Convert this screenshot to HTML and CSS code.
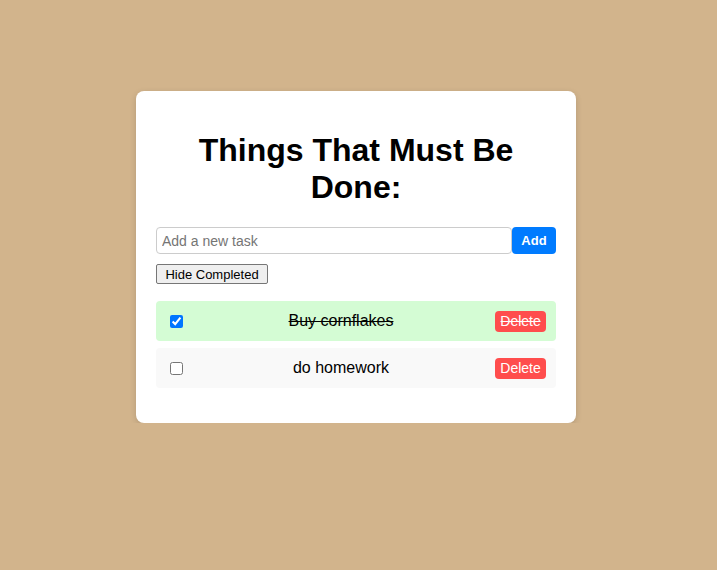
FILE: index.html
```html
<!DOCTYPE html>
<html>
<head>
<meta charset="utf-8">
<link rel="stylesheet" href="styles.css">
</head>
<body>
<div class="card">
  <h1 class="title">Things That Must Be Done:</h1>
  <div class="add-row">
    <input class="task-input" type="text" placeholder="Add a new task">
    <button class="add-btn">Add</button>
  </div>
  <button class="hide-btn">Hide Completed</button>
  <ul class="list">
    <li class="item completed">
      <input type="checkbox" class="check" checked>
      <span class="label">Buy cornflakes</span>
      <button class="del-btn">Delete</button>
    </li>
    <li class="item">
      <input type="checkbox" class="check">
      <span class="label">do homework</span>
      <button class="del-btn">Delete</button>
    </li>
  </ul>
</div>
</body>
</html>
```

FILE: styles.css
```css
html, body {
  margin: 0;
  padding: 0;
}
body {
  background: #d2b48c;
  font-family: "Liberation Sans", Arial, sans-serif;
  display: flex;
  justify-content: center;
  padding: 91px 5px 0 0;
}
.card {
  width: 400px;
  background: #fff;
  border-radius: 8px;
  padding: 20px 20px 35px;
  box-shadow: 0 2px 6px rgba(0,0,0,0.15);
}
.title {
  font-size: 32px;
  font-weight: bold;
  text-align: center;
  margin: 21px 0 21px;
  line-height: 37px;
}
.add-row {
  display: flex;
}
.task-input {
  flex: 1;
  height: 27px;
  box-sizing: border-box;
  border: 1px solid #ccc;
  border-radius: 4px;
  padding: 4px 5px;
  font-family: "Liberation Sans", Arial, sans-serif;
  font-size: 14px;
  margin: 0;
  outline: none;
}
.task-input::placeholder {
  color: #757575;
}
.add-btn {
  width: 44px;
  height: 27px;
  border: none;
  border-radius: 4px;
  background: #007bff;
  color: #fff;
  font-family: "Liberation Sans", Arial, sans-serif;
  font-size: 13px;
  font-weight: bold;
  margin: 0;
  padding: 0;
}
.hide-btn {
  display: block;
  margin-top: 10px;
  height: 20px;
  width: 112px;
  padding: 0;
  font-family: "Liberation Sans", Arial, sans-serif;
  font-size: 13px;
  background: #efefef;
  border: 1px solid #767676;
  border-radius: 2px;
  color: #000;
}
.list {
  list-style: none;
  margin: 17px 0 0;
  padding: 0;
  display: flex;
  flex-direction: column;
  gap: 7px;
}
.item {
  display: flex;
  align-items: center;
  height: 40px;
  box-sizing: border-box;
  padding: 0 10px;
  background: #f9f9f9;
  border-radius: 4px;
  font-size: 16px;
}
.item.completed {
  background: #d4fcd4;
  text-decoration: line-through;
}
.check {
  width: 13px;
  height: 13px;
  margin: 0 0 0 4px;
}
.label {
  flex: 1;
  text-align: center;
  padding-left: 4px;
}
.del-btn {
  background: #ff4d4d;
  color: #fff;
  border: none;
  border-radius: 4px;
  height: 21px;
  width: 51px;
  padding: 0;
  font-family: "Liberation Sans", Arial, sans-serif;
  font-size: 14px;
  margin: 0;
  text-decoration: inherit;
}
```
